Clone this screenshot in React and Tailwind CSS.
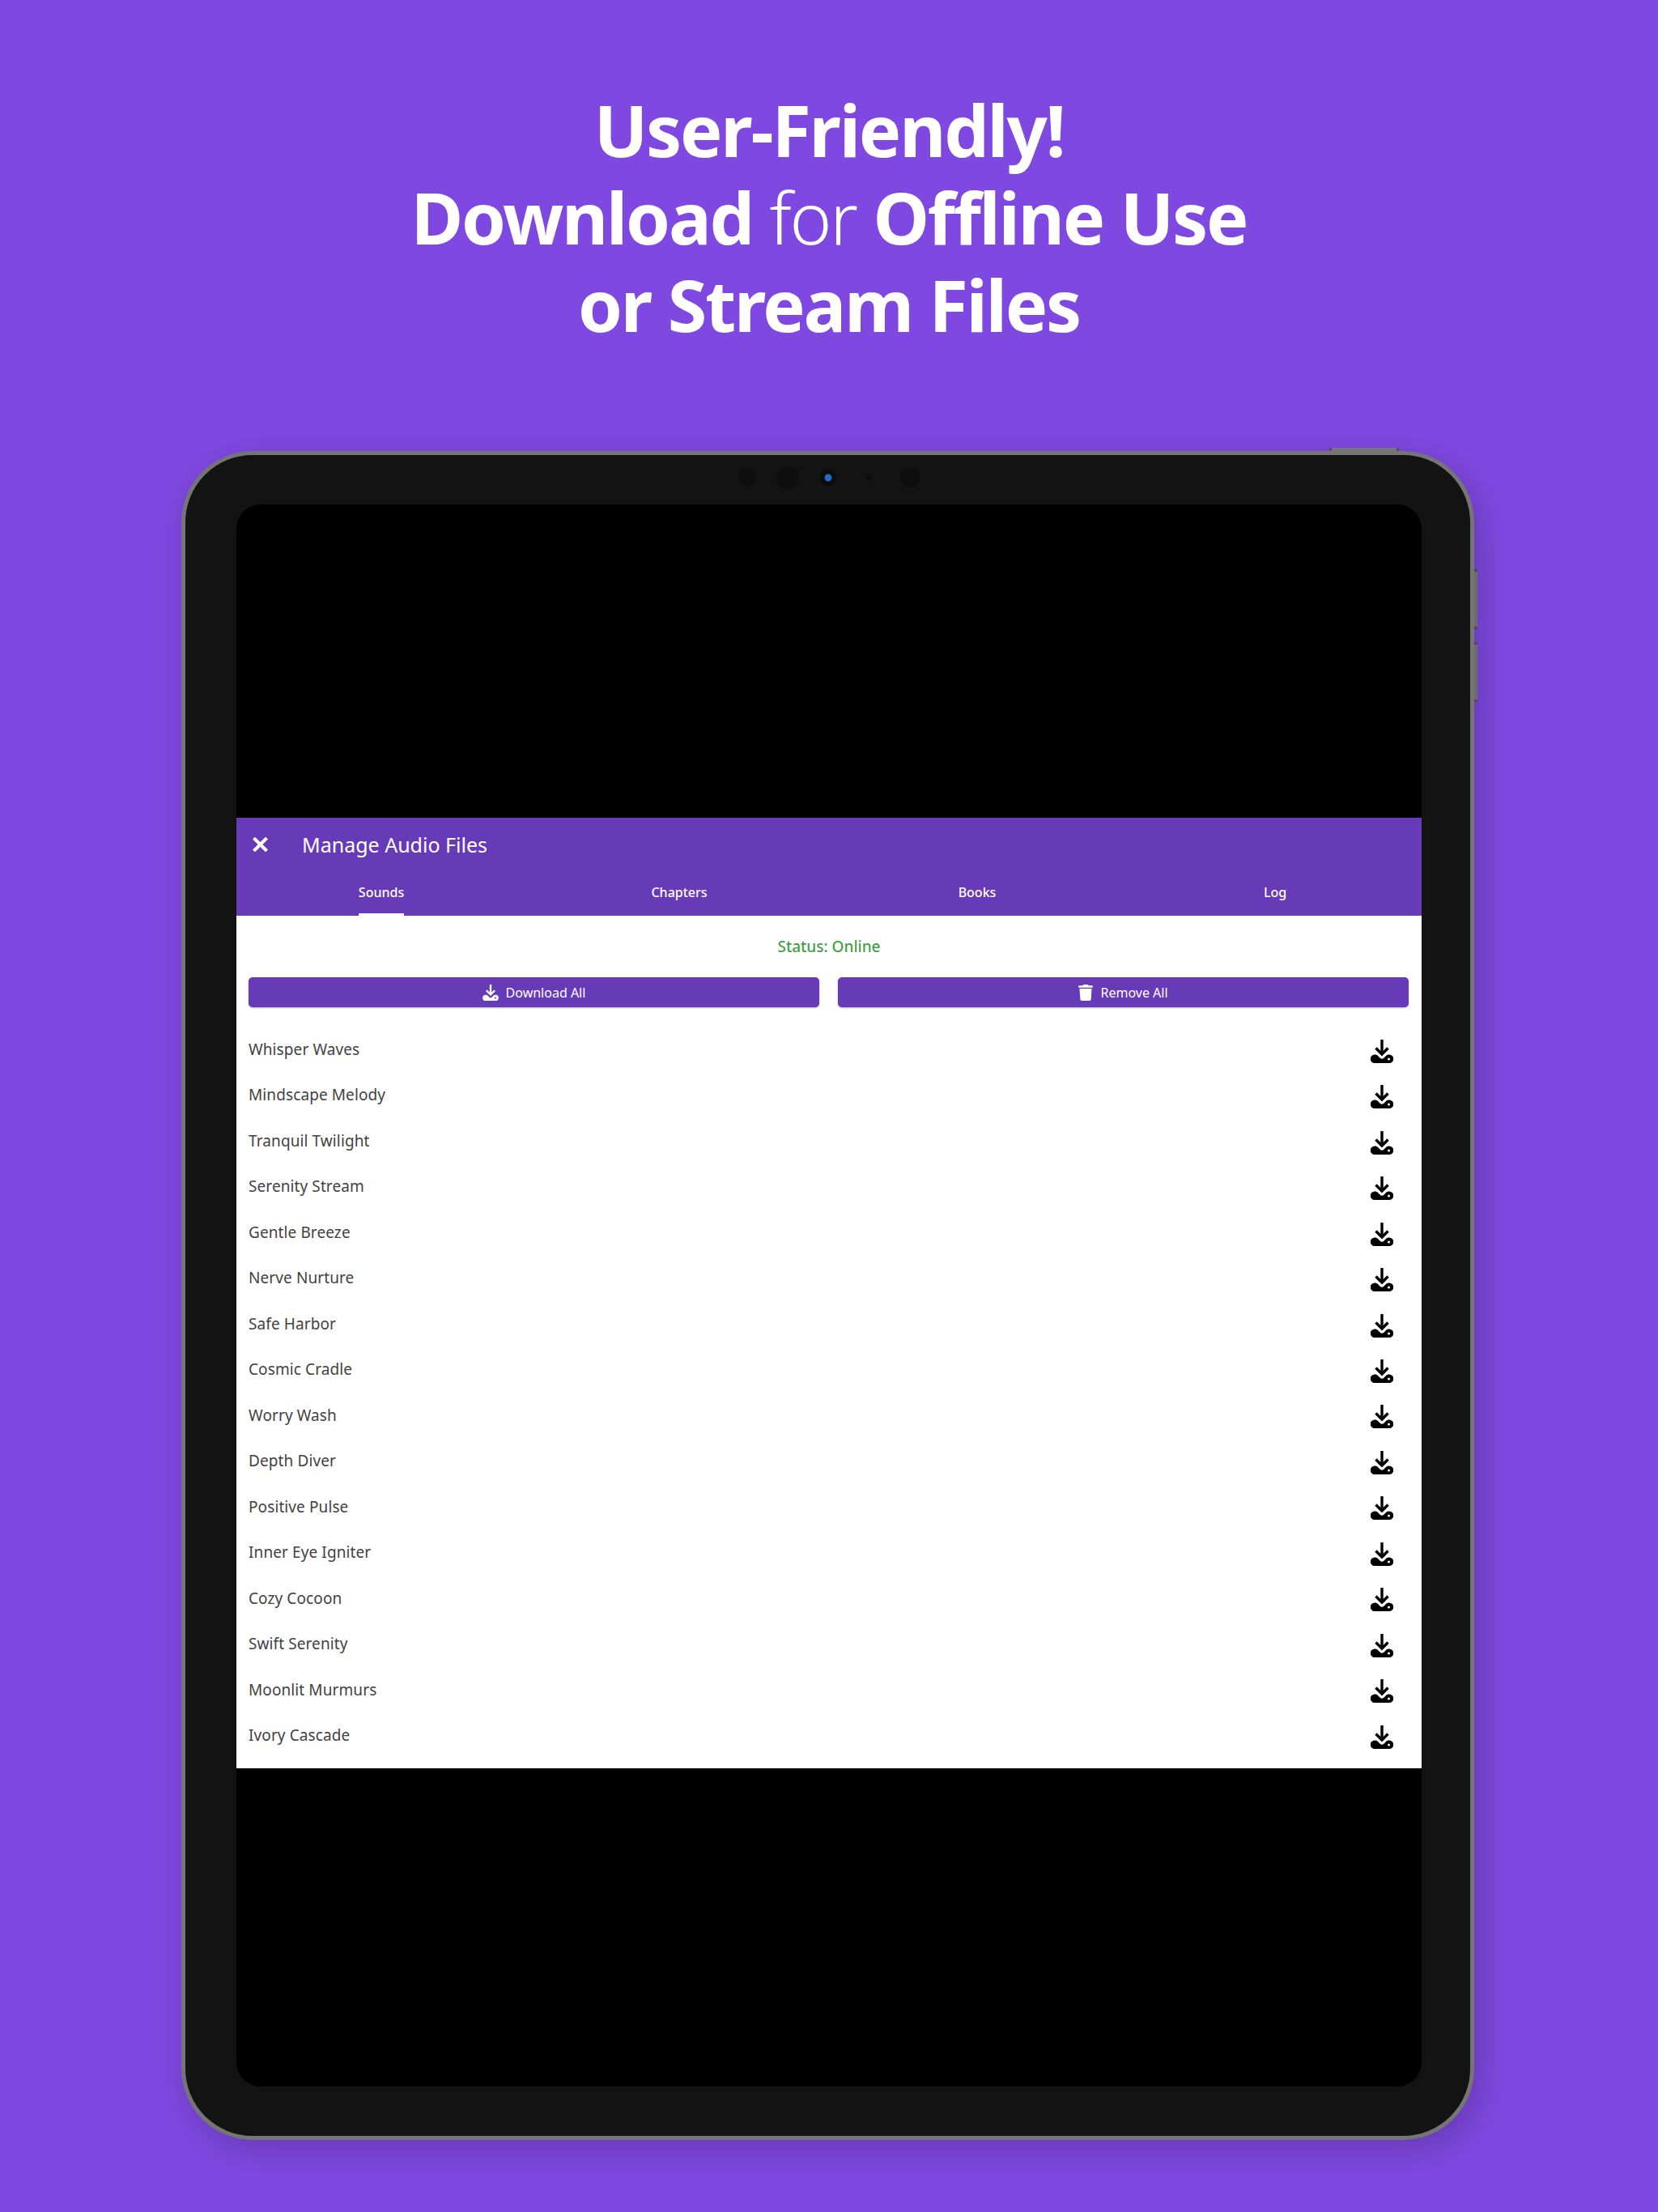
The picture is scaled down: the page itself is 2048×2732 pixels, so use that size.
import React from "react";
import { FaTrash } from "react-icons/fa";

const tracks = [
  "Whisper Waves",
  "Mindscape Melody",
  "Tranquil Twilight",
  "Serenity Stream",
  "Gentle Breeze",
  "Nerve Nurture",
  "Safe Harbor",
  "Cosmic Cradle",
  "Worry Wash",
  "Depth Diver",
  "Positive Pulse",
  "Inner Eye Igniter",
  "Cozy Cocoon",
  "Swift Serenity",
  "Moonlit Murmurs",
  "Ivory Cascade",
];

const tabs = ["Sounds", "Chapters", "Books", "Log"];

function DownloadIcon({ className }) {
  return (
    <svg viewBox="0 0 28 29" className={className} fill="currentColor">
      <rect x="12.3" y="0" width="3.4" height="17" />
      <path d="M6.5 10.5 L14 18 L21.5 10.5" fill="none" stroke="currentColor" strokeWidth="3.4" />
      <path
        fillRule="evenodd"
        d="M5 18.5 C7 18.5 8 19 9 20 L12 23 C13 24 15 24 16 23 L19 20 C20 19 21 18.5 23 18.5 A5.25 5.25 0 0 1 23 29 L5 29 A5.25 5.25 0 0 1 5 18.5 Z M22.5 22.5 A1.5 1.5 0 1 0 22.5 25.5 A1.5 1.5 0 1 0 22.5 22.5 Z"
      />
    </svg>
  );
}

function Cameras() {
  return (
    <svg viewBox="0 0 240 30" className="absolute top-[13px] left-[673px] w-[240px] h-[30px]">
      <circle cx="21" cy="15" r="11" fill="#0e0e0e" />
      <circle cx="71" cy="15" r="14" fill="#0e0e0e" />
      <circle cx="121" cy="15" r="10" fill="#0c0c0c" />
      <circle cx="121" cy="15" r="4.5" fill="#1f6fc4" />
      <circle cx="171" cy="15" r="3" fill="#0b0b0b" />
      <circle cx="222" cy="15" r="12" fill="#0e0e0e" />
    </svg>
  );
}

function ActionButton({ icon, label }) {
  return (
    <button className="flex-1 h-[37px] flex items-center justify-center gap-[9px] bg-[#673ab7] text-white text-[16px] rounded-[5px] shadow-[0_1px_2px_rgba(0,0,0,0.3)]">
      {icon}
      {label}
    </button>
  );
}

export default function App() {
  return (
    <div className="w-[2048px] h-[2732px] bg-[#7f48e0] overflow-hidden font-['Noto_Sans',sans-serif]">
      <h1 className="pt-[106px] text-center text-white text-[88px] leading-[108px] font-bold tracking-[-2.2px]">
        User-Friendly!
        <br />
        Download <span className="font-light">for</span> Offline Use
        <br />
        or Stream Files
      </h1>

      <div className="relative mt-[127px] ml-[224px] w-[1597px] h-[2086px]">
        {/* side and top buttons */}
        <div className="absolute -top-[4px] left-[1418px] w-[86px] h-[8px] bg-[#7d7d7d] border-x-[3px] border-[#555] rounded-t-[2px]" />
        <div className="absolute top-[146px] -right-[4px] w-[8px] h-[74px] bg-[#7d7d7d] border-y-[3px] border-[#555] rounded-r-[2px]" />
        <div className="absolute top-[236px] -right-[4px] w-[8px] h-[74px] bg-[#7d7d7d] border-y-[3px] border-[#555] rounded-r-[2px]" />

        <div className="relative h-full rounded-[88px] border-[5px] border-[#757575] bg-[#131313] pt-[61px] pb-[61px] pl-[63px] pr-[60px] shadow-[8px_12px_40px_rgba(0,0,0,0.2)]">
          <Cameras />

          <div className="h-full flex flex-col bg-black rounded-[30px] overflow-hidden">
            <div className="h-[387px]" />

            <div className="h-[1174px] flex flex-col bg-white">
              <div className="h-[121px] bg-[#673ab7] text-white overflow-hidden">
                <div className="h-[66px] flex items-center pl-[20px]">
                  <svg viewBox="0 0 19 18" className="w-[19px] h-[18px]" stroke="currentColor" strokeWidth="4">
                    <path d="M1.5 1 L17.5 17 M17.5 1 L1.5 17" />
                  </svg>
                  <span className="ml-[42px] text-[25px] leading-none">Manage Audio Files</span>
                </div>
                <div className="-ml-[5px] -mr-[3px] grid grid-cols-4 h-[55px]">
                  {tabs.map((tab, i) => (
                    <div key={tab} className="flex justify-center">
                      <div className={`h-full flex items-center text-[16px] font-medium ${i === 0 ? "border-b-[3px] border-white" : "border-b-[3px] border-transparent"}`}>
                        {tab}
                      </div>
                    </div>
                  ))}
                </div>
              </div>

              <div className="h-[76px] flex items-center justify-center text-[#43a047] text-[19px] font-medium">
                Status: Online
              </div>

              <div className="flex gap-[23px] pl-[15px] pr-[16px]">
                <ActionButton icon={<DownloadIcon className="w-[20px] h-[20px]" />} label="Download All" />
                <ActionButton icon={<FaTrash className="w-[18px] h-[20px]" />} label="Remove All" />
              </div>

              <div className="mt-[24px]">
                {tracks.map((name) => (
                  <div key={name} className="h-[56.47px] flex items-center justify-between pl-[15px] pr-[35px] text-[#424242] text-[19px] tracking-[0.1px]">
                    {name}
                    <DownloadIcon className="w-[28px] h-[29px] mt-[4px] text-black" />
                  </div>
                ))}
              </div>
            </div>
          </div>
        </div>
      </div>
    </div>
  );
}
